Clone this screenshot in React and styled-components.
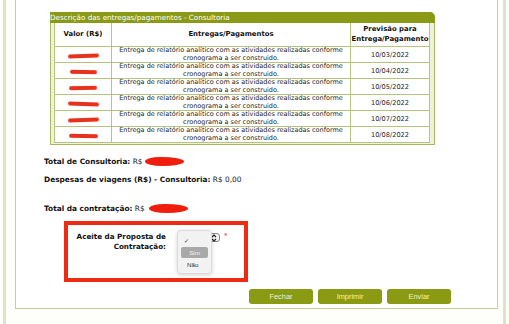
import React from "react";
import styled, { createGlobalStyle } from "styled-components";

const GlobalStyle = createGlobalStyle`
  html, body {
    margin: 0;
    padding: 0;
    background: #ffffff;
  }
  body {
    width: 509px;
    height: 324px;
    overflow: hidden;
    font-family: "DejaVu Sans", Verdana, sans-serif;
    color: #1a1a1a;
  }
`;

const rows = [
  { date: "10/03/2022", w: 31, r: -2 },
  { date: "10/04/2022", w: 27, r: 1 },
  { date: "10/05/2022", w: 28, r: -1 },
  { date: "10/06/2022", w: 31, r: 2 },
  { date: "10/07/2022", w: 31, r: -2 },
  { date: "10/08/2022", w: 29, r: 1 },
];

export default function App() {
  return (
    <>
      <GlobalStyle />
      <Page>
        <Frame>
          <Panel>
            <TableBox>
              <Caption>Descrição das entregas/pagamentos - Consultoria</Caption>
              <TableBody>
                <Table>
                  <colgroup>
                    <col style={{ width: 57 }} />
                    <col style={{ width: 239 }} />
                    <col style={{ width: 79 }} />
                  </colgroup>
                  <thead>
                    <tr>
                      <Th>Valor (R$)</Th>
                      <Th>Entregas/Pagamentos</Th>
                      <Th>
                        Previsão para
                        <br />
                        Entrega/Pagamento
                      </Th>
                    </tr>
                  </thead>
                  <tbody>
                    {rows.map((row) => (
                      <tr key={row.date}>
                        <Td>
                          <Scribble $w={row.w} $r={row.r} />
                        </Td>
                        <Td $text>
                          Entrega de relatório analítico com as atividades realizadas conforme
                          <br />
                          cronograma a ser construido.
                        </Td>
                        <Td $date>{row.date}</Td>
                      </tr>
                    ))}
                  </tbody>
                </Table>
              </TableBody>
            </TableBox>

            <Totals>
              <Line>
                <b>Total de Consultoria:</b> R$ <Redact />
              </Line>
              <Line>
                <b>Despesas de viagens (R$) - Consultoria:</b> R$ 0,00
              </Line>
              <Line $gap>
                <b>Total da contratação:</b> R$ <Redact $wide />
              </Line>
            </Totals>

            <Highlight>
              <Label>
                Aceite da Proposta de
                <br />
                Contratação:
              </Label>
              <SelectWrap>
                <SelectBox>
                  <svg width="6" height="8" viewBox="0 0 6 8">
                    <path d="M1 3 L3 1 L5 3 M1 5 L3 7 L5 5" fill="none" stroke="#222" strokeWidth="1.2" />
                  </svg>
                </SelectBox>
                <Star>*</Star>
                <Menu>
                  <MenuItem>✓</MenuItem>
                  <MenuItem $active>Sim</MenuItem>
                  <MenuItem>Não</MenuItem>
                </Menu>
              </SelectWrap>
            </Highlight>

            <Actions>
              <Button>Fechar</Button>
              <Button>Imprimir</Button>
              <Button>Enviar</Button>
            </Actions>
          </Panel>
        </Frame>
      </Page>
    </>
  );
}

const Page = styled.div`
  padding-left: 3px;
  height: 324px;
`;

const Frame = styled.div`
  width: 497px;
  height: 324px;
  border-left: 3px solid #dde4bf;
  border-right: 3px solid #dde4bf;
  background: #fefefb;
`;

const Panel = styled.div`
  margin-left: 9px;
  width: 481px;
  border: 1px solid #c6cd9f;
  border-top: none;
  background: #ffffff;
  padding-top: 12px;
  padding-bottom: 4px;
`;

const TableBox = styled.div`
  margin-left: 34px;
  width: 385px;
`;

const Caption = styled.div`
  height: 11px;
  line-height: 11px;
  background: #8a9a17;
  color: #ffffff;
  font-size: 7.2px;
  border-radius: 0 5px 0 0;
  white-space: nowrap;
`;

const TableBody = styled.div`
  border: 1px solid #a9b761;
  border-top: none;
  background: #eef2d9;
  padding: 0 3px 1px 3px;
`;

const Table = styled.table`
  width: 376px;
  border-collapse: collapse;
  table-layout: fixed;
  background: #ffffff;
`;

const Th = styled.th`
  height: 23px;
  padding: 0;
  border: 1px solid #b7c47d;
  border-top: none;
  font-size: 6.9px;
  line-height: 9.5px;
  font-weight: bold;
  text-align: center;
  vertical-align: middle;
  white-space: nowrap;
  color: #111;
`;

const Td = styled.td`
  height: 15px;
  padding: 0;
  border: 1px solid #b7c47d;
  text-align: center;
  vertical-align: middle;
  white-space: nowrap;
  overflow: visible;
  font-size: ${(p) => (p.$date ? "6.6px" : "6.5px")};
  line-height: ${(p) => (p.$text ? "7.4px" : "10px")};
  color: #1e1e1e;
`;

const Scribble = styled.span`
  display: inline-block;
  width: ${(p) => p.$w}px;
  height: 4px;
  margin-top: 2px;
  border-radius: 3px;
  background: #e8311d;
  filter: blur(0.4px);
  transform: rotate(${(p) => p.$r}deg);
  vertical-align: middle;
`;

const Totals = styled.div`
  margin-top: 12px;
  padding-left: 28px;
  font-size: 7.4px;
`;

const Line = styled.div`
  height: 10px;
  line-height: 10px;
  margin-top: ${(p) => (p.$gap ? "19px" : "8px")};
  white-space: nowrap;
  color: #222;

  &:first-child {
    margin-top: 0;
  }

  b {
    color: #111;
  }
`;

const Redact = styled.span`
  display: inline-block;
  width: 39px;
  height: 9px;
  margin-left: ${(p) => (p.$wide ? "2px" : "0")};
  border-radius: 40% 60% 55% 45% / 50%;
  background: #f01d0c;
  vertical-align: middle;
  filter: blur(0.3px);
`;

const Highlight = styled.div`
  margin: 7px 0 0 48px;
  width: 176px;
  border: 4px solid #ee2b12;
  display: flex;
  align-items: flex-start;
  gap: 11px;
  padding-top: 7px;
  box-sizing: content-box;
  height: 46px;
`;

const Label = styled.div`
  width: 98px;
  text-align: right;
  font-size: 7.2px;
  font-weight: bold;
  line-height: 10px;
  white-space: nowrap;
  color: #111;
`;

const SelectWrap = styled.div`
  position: relative;
  display: flex;
  align-items: flex-start;
  gap: 4px;
  margin-top: 1px;
`;

const SelectBox = styled.div`
  width: 43px;
  height: 9px;
  border: 1px solid #8a8a8a;
  border-radius: 3px;
  background: #f3f3f3;
  display: flex;
  align-items: center;
  justify-content: flex-end;
  padding-right: 2px;
  box-sizing: border-box;
`;

const Star = styled.span`
  color: #e8311d;
  font-size: 7px;
  line-height: 6px;
`;

const Menu = styled.div`
  position: absolute;
  left: 0;
  top: -3px;
  width: 35px;
  height: 44px;
  box-sizing: border-box;
  padding: 4px 3px;
  background: #f2f2f2;
  border: 1px solid #dcdcdc;
  border-radius: 4px;
  box-shadow: 0 1px 4px rgba(0, 0, 0, 0.18);
  display: flex;
  flex-direction: column;
  gap: 1px;
  font-family: "Liberation Sans", Arial, sans-serif;
`;

const MenuItem = styled.div`
  height: 11px;
  line-height: 11px;
  padding-left: ${(p) => (p.$active ? "0" : "3px")};
  text-align: ${(p) => (p.$active ? "center" : "left")};
  font-size: 6.2px;
  border-radius: 2px;
  background: ${(p) => (p.$active ? "#a9a9a9" : "transparent")};
  color: ${(p) => (p.$active ? "#f4f4f4" : "#333")};

  &:last-child {
    padding-left: 6px;
  }
`;

const Actions = styled.div`
  display: flex;
  justify-content: flex-end;
  gap: 5px;
  margin-top: 7px;
  padding-right: 46px;
`;

const Button = styled.button`
  width: 64px;
  height: 15px;
  padding: 0;
  border: none;
  border-radius: 3px;
  background: #8a9a12;
  color: #eef2d0;
  font-family: "Liberation Sans", Arial, sans-serif;
  font-size: 7.4px;
  cursor: pointer;
`;
